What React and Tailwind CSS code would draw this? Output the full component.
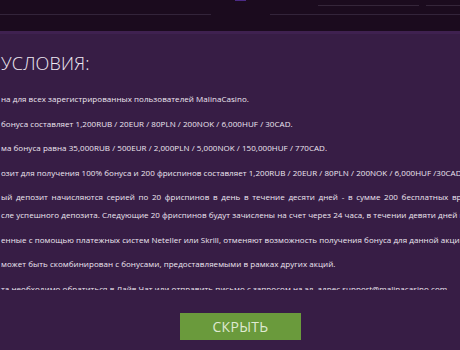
export default function App() {
  const font = { fontFamily: '"Open Sans", "Noto Sans", sans-serif' };
  const paras = [
    ["на для всех зарегистрированных пользователей MalinaCasino."],
    ["бонуса составляет 1,200RUB / 20EUR / 80PLN / 200NOK / 6,000HUF / 30CAD."],
    ["ма бонуса равна 35,000RUB / 500EUR / 2,000PLN / 5,000NOK / 150,000HUF / 770CAD."],
    ["озит для получения 100% бонуса и 200 фриспинов составляет 1,200RUB / 20EUR / 80PLN / 200NOK / 6,000HUF /30CAD."],
    [
      "ый депозит начисляются серией по 20 фриспинов в день в течение десяти дней - в сумме 200 бесплатных вращений.",
      "сле успешного депозита. Следующие 20 фриспинов будут зачислены на счет через 24 часа, в течении девяти дней после.",
    ],
    ["енные с помощью платежных систем Neteller или Skrill, отменяют возможность получения бонуса для данной акции."],
    ["может быть скомбинирован с бонусами, предоставляемыми в рамках других акций."],
    ["та необходимо обратиться в Лайв Чат или отправить письмо с запросом на эл. адрес support@malinacasino.com."],
  ];
  return (
    <div className="w-[460px] h-[350px] overflow-hidden bg-[#371d45] flex flex-col" style={font}>
      <div className="h-[31px] bg-[#1b0b1e] flex flex-col shrink-0">
        <div className="flex h-px shrink-0">
          <div className="ml-[235px] w-[11px] h-px bg-[#4b2a86]" />
        </div>
        <div className="flex h-px mt-[4px] shrink-0">
          <div className="ml-[318px] w-[101px] h-px bg-[#35263a]" />
          <div className="ml-[7px] flex-1 h-px bg-[#35263a]" />
        </div>
        <div className="flex h-px mt-[8px] shrink-0">
          <div className="w-[211px] h-px bg-[#33243a]" />
          <div className="ml-[59px] flex-1 h-px bg-[#33243a]" />
        </div>
      </div>
      <div className="h-[3px] bg-[#3f2150] shrink-0" />
      <div className="pt-[16px] pl-[1px] shrink-0">
        <div className="text-[18px] leading-[26px] font-light text-[#f0eaf3] tracking-[0.2px]">УСЛОВИЯ:</div>
      </div>
      <div className="mt-[14px] h-[200px] shrink-0 overflow-hidden pl-[1px] text-[8px] leading-[18px] text-[#eee7f1] whitespace-nowrap tracking-[0.05px]">
        {paras.map((p, i) => (
          <div key={i} className={i === 0 ? "" : "mt-[6.5px]"}>
            {p.map((l, j) => (
              <div key={j} className={i === 4 && j === 0 ? "[word-spacing:1.5px]" : ""}>
                {l}
              </div>
            ))}
          </div>
        ))}
      </div>
      <div className="flex pl-[180px] mt-[23px] shrink-0">
        <button className="w-[121px] h-[27px] bg-[#6a9a3c] text-[#dfe9d3] text-[14px] font-normal tracking-[0.3px] flex items-center justify-center">
          СКРЫТЬ
        </button>
      </div>
    </div>
  );
}
